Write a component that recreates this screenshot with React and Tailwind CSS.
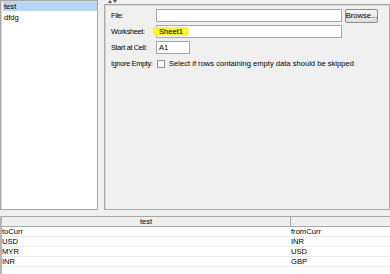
import React from 'react';

const rows = [
    ['toCurr', 'fromCurr'],
    ['USD', 'INR'],
    ['MYR', 'USD'],
    ['INR', 'GBP'],
];

const Field = ({ label, children }) => (
    <div className="flex items-center h-[15px]">
        <div className="w-[45px] shrink-0 whitespace-nowrap text-[7.3px] tracking-[-0.3px]">{label}</div>
        {children}
    </div>
);

const App = () => {
    return (
        <div className="w-[390px] h-[274px] bg-[#f0f0f0] flex flex-col overflow-hidden text-[7.6px] text-black font-['Liberation_Sans',Arial,sans-serif] leading-none">
            {/* top split */}
            <div className="flex h-[210px]">
                <div className="w-[98px] bg-white border border-[#a8a8a8] shadow-[inset_1px_1px_0_#d6d6d6] pt-[1px] pl-[2px]">
                    <div className="h-[9px] bg-[#b7d6f7] flex items-center pl-[1px]">test</div>
                    <div className="h-[10px] flex items-center pl-[1px] pt-[4px]">dfdg</div>
                </div>
                <div className="w-[6px]" />
                <div className="flex-1 flex flex-col">
                    <div className="h-[4px] flex items-start gap-[1px] pl-[4px]">
                        <svg width="4" height="3" viewBox="0 0 4 3"><path d="M0 3 L2 0 L4 3 Z" fill="#555" /></svg>
                        <svg width="4" height="3" viewBox="0 0 4 3"><path d="M0 0 L4 0 L2 3 Z" fill="#555" /></svg>
                    </div>
                    <div className="flex-1 border border-[#a8a8a8] shadow-[inset_1px_1px_0_#d6d6d6] px-[6px] pt-[3px] flex flex-col gap-[1px]">
                        <Field label="File:">
                            <div className="w-[186px] h-[13px] bg-white border border-[#a5a5a5]" />
                            <div className="ml-[3px] w-[33px] h-[14px] border border-[#8c8c8c] rounded-[2px] bg-gradient-to-b from-[#f6f6f6] to-[#dedede] flex items-center justify-center">
                                Browse...
                            </div>
                        </Field>
                        <Field label="Worksheet:">
                            <div className="w-[186px] h-[13px] bg-white border border-[#a5a5a5] relative flex items-center pl-[2px]">
                                <div className="absolute -left-[4px] top-[1px] w-[36px] h-[9px] bg-[#f5f53a] rounded-[3px]" />
                                <span className="relative">Sheet1</span>
                            </div>
                        </Field>
                        <Field label="Start at Cell:">
                            <div className="w-[34px] h-[13px] bg-white border border-[#a5a5a5] flex items-center pl-[2px]">A1</div>
                        </Field>
                        <Field label="Ignore Empty:">
                            <div className="ml-[1px] w-[8px] h-[8px] bg-white border border-[#8f8f8f]" />
                            <span className="ml-[4px] whitespace-nowrap">Select if rows containing empty data should be skipped</span>
                        </Field>
                    </div>
                </div>
            </div>

            <div className="h-[6px]" />

            {/* table */}
            <div className="flex-1 bg-white border-l-2 border-[#b5b5b5]">
                <div className="grid grid-cols-[289px_1fr] h-[11px] bg-[#efefef] border-t border-b border-[#a8a8a8]">
                    <div className="flex items-center justify-center border-r border-[#a8a8a8]">test</div>
                    <div />
                </div>
                {rows.map((r, i) => (
                    <div key={i} className="grid grid-cols-[289px_1fr] h-[10px] border-b border-[#ececec]">
                        <div className="flex items-center">{r[0]}</div>
                        <div className="flex items-center">{r[1]}</div>
                    </div>
                ))}
            </div>
        </div>
    );
};

export default App;
